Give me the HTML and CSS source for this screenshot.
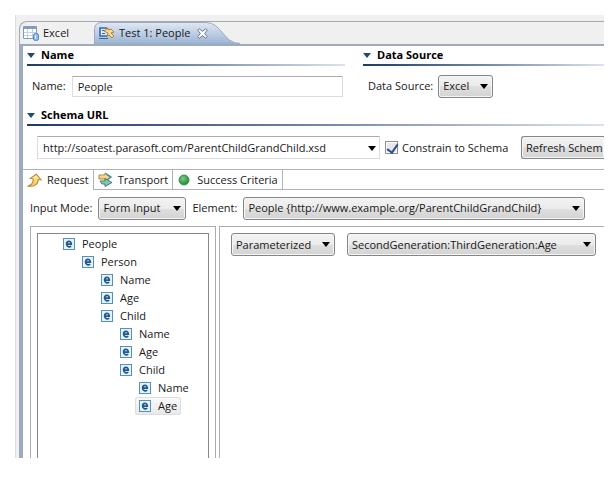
FILE: index.html
```html
<!DOCTYPE html>
<html lang="en">
<head>
<meta charset="utf-8">
<title>Test 1: People</title>
<link rel="stylesheet" href="styles.css">
</head>
<body>
<svg class="defs" width="0" height="0" aria-hidden="true">
  <linearGradient id="tabFill" x1="0" y1="0" x2="0" y2="1"><stop offset="0" stop-color="#e0e8f3"/><stop offset="1" stop-color="#9bb5d5"/></linearGradient>
  <linearGradient id="gold" x1="0" y1="0" x2="0" y2="1"><stop offset="0" stop-color="#fff3ae"/><stop offset="1" stop-color="#f0bd48"/></linearGradient>
  <radialGradient id="green" cx=".4" cy=".35" r=".65"><stop offset="0" stop-color="#85c889"/><stop offset="1" stop-color="#1f8a35"/></radialGradient>
  <symbol id="element" viewBox="0 0 12 12"><rect x=".5" y=".5" width="11" height="11" fill="#e4f3fa" stroke="#5990b8"/><path d="M3.6 6.1h4.7C8.3 2.3 3.6 2.4 3.6 6.1c0 3 3 3.2 4.6 2" fill="none" stroke="#215789" stroke-width="1.7"/></symbol>
</svg>
<main class="editor">
  <div class="editor-tabs" role="tablist">
    <button class="editor-tab" role="tab" aria-selected="false">
      <svg width="17" height="17" viewBox="0 0 17 17"><path d="M.5 1.5h13v12H.5z" fill="#fff" stroke="#8299b8"/><path d="M1 2h12v2H1z" fill="#7f9cc5"/><path d="M1 7.5h12M1 10.5h12M4.5 4v9M9.5 4v9" stroke="#c5d0df"/><rect x="10.5" y="8.5" width="5" height="7" rx="2" fill="#8dbbe5" stroke="#4c86bf"/><path d="M12.500 10.500v3" stroke="#fff"/></svg>
      Excel
    </button>
    <button class="editor-tab active" role="tab" aria-selected="true">
      <svg class="tab-shape" viewBox="0 0 146 23" preserveAspectRatio="none"><path d="M.5 23V7Q1 .5 8 .5h104c16 0 17 22 34 22v.5z" fill="url(#tabFill)" stroke="#9aa9bb"/></svg>
      <svg width="17" height="14" viewBox="0 0 17 14"><path d="M9 2H2v8h7" fill="#dceafa" stroke="#3568a5" stroke-width="1.6"/><path d="M4 4.5h4M4 7.5h3M1 12.5h9" stroke="#3568a5"/><path d="M6 5l4-3v2l3-1 3 3-3 1 3 3-2 2-3-3-2 1 1-3z" fill="#f8dc91" stroke="#aa8145"/></svg>
      Test 1: People
      <svg class="close" width="11" height="11" viewBox="0 0 11 11"><path d="M.7 2.2L2.2.7l3.3 2.7L8.800.7l1.500 1.500-2.700 3.300 2.700 3.300-1.500 1.500-3.300-2.700-3.300 2.700L.7 8.800l2.700-3.300z" fill="#fff" stroke="#6a7685"/></svg>
    </button>
  </div>
  <div class="editor-body">
    <div class="columns">
      <section>
        <h2>Name</h2>
        <div class="field"><label for="name">Name:</label><input class="text" id="name" value="People"></div>
      </section>
      <section>
        <h2>Data Source</h2>
        <div class="field"><label for="source">Data Source:</label><span class="pick source"><select id="source"><option>Excel</option></select></span></div>
      </section>
    </div>
    <section class="schema">
      <h2>Schema URL</h2>
      <div class="url-row">
        <div class="combo"><input id="url" aria-label="Schema URL" value="http://soatest.parasoft.com/ParentChildGrandChild.xsd"><button aria-label="Show schema list"></button></div>
        <input class="check" type="checkbox" id="constrain" checked><label for="constrain">Constrain to Schema</label>
        <button class="refresh">Refresh Schem</button>
      </div>
    </section>
    <div class="tabs" role="tablist">
      <button class="tab selected" role="tab" aria-selected="true"><svg width="15" height="15" viewBox="0 0 15 15"><path d="M1.5 14C6 12 6.5 9 6 6H3l5.5-5L14 6h-3c1 5-3 8-9.5 8z" transform="rotate(8 7 7)" fill="url(#gold)" stroke="#b48435"/></svg>Request</button>
      <button class="tab" role="tab" aria-selected="false"><svg width="15" height="15" viewBox="0 0 15 15"><path d="M1 3h6V.8l6 4.200-6 4.200V7H1z" fill="url(#gold)" stroke="#a78b45"/><path d="M2 9h5V6.500l7 4-7 4V12H4z" fill="#8bc6a2" stroke="#427e83"/><path d="M8 2l5 3-4 3" fill="none" stroke="#5387b4" stroke-width="1.5"/></svg>Transport</button>
      <button class="tab" role="tab" aria-selected="false"><svg width="15" height="15" viewBox="0 0 15 15"><circle cx="7" cy="8" r="5" fill="url(#green)" stroke="#3a9750"/></svg>Success Criteria</button>
    </div>
    <div class="mode-row">
      <label for="mode">Input Mode:</label><span class="pick mode"><select id="mode"><option>Form Input</option></select></span>
      <label for="element-type">Element:</label><span class="pick element"><select id="element-type"><option>People {http://www.example.org/ParentChildGrandChild}</option></select></span>
    </div>
    <div class="panes">
      <div class="pane tree-pane">
        <ul class="tree" role="tree">
          <li role="treeitem"><span><svg><use href="#element"/></svg>People</span>
            <ul role="group"><li role="treeitem"><span><svg><use href="#element"/></svg>Person</span>
              <ul role="group">
                <li role="treeitem"><span><svg><use href="#element"/></svg>Name</span></li>
                <li role="treeitem"><span><svg><use href="#element"/></svg>Age</span></li>
                <li role="treeitem"><span><svg><use href="#element"/></svg>Child</span>
                  <ul role="group">
                    <li role="treeitem"><span><svg><use href="#element"/></svg>Name</span></li>
                    <li role="treeitem"><span><svg><use href="#element"/></svg>Age</span></li>
                    <li role="treeitem"><span><svg><use href="#element"/></svg>Child</span>
                      <ul role="group">
                        <li role="treeitem"><span><svg><use href="#element"/></svg>Name</span></li>
                        <li role="treeitem" aria-selected="true"><span class="current"><svg><use href="#element"/></svg>Age</span></li>
                      </ul></li>
                  </ul></li>
              </ul></li></ul></li>
        </ul>
      </div>
      <div class="pane values">
        <span class="pick kind"><select aria-label="Value type"><option>Parameterized</option></select></span>
        <span class="pick column"><select aria-label="Column"><option>SecondGeneration:ThirdGeneration:Age</option></select></span>
      </div>
    </div>
  </div>
</main>
</body>
</html>
```
FILE: styles.css
```css
* { box-sizing: border-box; }
body {
  display: flex;
  min-height: 100vh;
  margin: 0;
  padding: 15px 8px 45px 15px;
  background: #fff;
  color: #181818;
  font: 11px/18px "Open Sans", "Noto Sans", sans-serif;
}
button, input, select { font: inherit; color: inherit; margin: 0; }
button { padding: 0; border: 0; background: none; white-space: nowrap; }
label { white-space: nowrap; }
svg { flex: none; }
.defs { position: absolute; }

.editor {
  display: flex;
  flex-direction: column;
  flex: 1;
  min-width: 0;
  padding: 6px 0 0 3px;
  background: #f0f0f0;
  border-left: 1px solid #dcdcdc;
}
.editor-tabs {
  display: flex;
  height: 23px;
  border: solid #a5a8ac;
  border-width: 1px 0 0 1px;
  border-top-left-radius: 8px;
}
.editor-tab {
  position: relative;
  display: flex;
  align-items: center;
  gap: 3px;
  width: 74px;
  padding-left: 3px;
}
.editor-tab.active { width: 146px; padding-left: 4px; gap: 4px; isolation: isolate; }
.tab-shape { position: absolute; inset: 0; z-index: -1; width: 100%; height: 100%; }
.close { margin-left: 3px; }

.editor-body {
  display: flex;
  flex-direction: column;
  flex: 1;
  min-width: 0;
  overflow: hidden;
  background: #fff;
  border: solid #9eabbc;
  border-width: 2px 0 0 4px;
}
.columns {
  display: grid;
  grid-template-columns: 318fr 241fr;
  gap: 18px;
  padding-left: 4px;
}
h2 {
  display: flex;
  align-items: center;
  gap: 6px;
  height: 20px;
  margin: 0;
  padding-bottom: 2px;
  font-size: 11px;
  line-height: 18px;
  color: #000;
  background: linear-gradient(90deg, #1d3a66, #6f86a8 50%, #dde3ec) bottom / 100% 2px no-repeat;
}
h2::before {
  content: "";
  border: 4px solid transparent;
  border-top: 5px solid #1f4a72;
  border-bottom: 0;
}
.field { display: flex; align-items: center; gap: 5px; height: 40px; padding-left: 5px; }
.text {
  flex: 1;
  min-width: 0;
  height: 21px;
  margin-left: 1px;
  margin-right: 2px;
  padding: 0 5px;
  border: 1px solid #dcdce0;
  border-top-color: #aaabb0;
}
.pick { position: relative; display: block; height: 23px; }
.pick::after, .combo button::after {
  content: "";
  position: absolute;
  top: 9px;
  right: 5px;
  border: 4px solid transparent;
  border-top: 5px solid #000;
  border-bottom: 0;
  pointer-events: none;
}
.pick select, .refresh {
  width: 100%;
  height: 23px;
  padding: 0 4px;
  border: 1px solid #858585;
  border-radius: 3px;
  background: linear-gradient(#f3f3f3, #ebebeb 50%, #dfdfdf 50%, #d3d3d3);
  box-shadow: inset 0 0 0 1px #f5f5f5;
  appearance: none;
}
.source { width: 55px; }
.schema { padding-left: 4px; }
.url-row { display: flex; align-items: center; height: 43px; padding-left: 10px; }
.combo { position: relative; display: flex; flex: 0 0 343px; height: 23px; margin-right: 5px; border: 1px solid #dcdce0; border-top-color: #aaabb0; }
.combo input { flex: 1; min-width: 0; padding: 0 5px; border: 0; background: none; }
.combo button { width: 17px; }
.combo button::after { right: 3px; }
.check {
  appearance: none;
  flex: none;
  width: 13px;
  height: 13px;
  margin-right: 4px;
  border: 1px solid #8b8e92;
  background: #e5e9ee;
  box-shadow: inset 0 0 0 1px #fff;
}
.check:checked::after {
  content: "";
  display: block;
  width: 5px;
  height: 9px;
  margin-left: 3px;
  border: solid #344e90;
  border-width: 0 2px 2px 0;
  rotate: 35deg;
}
.refresh { flex: none; width: 83px; margin-left: auto; border-right: 0; border-radius: 3px 0 0 3px; text-align: left; }

.tabs { display: flex; height: 21px; border: solid #b0b2b5; border-width: 1px 0; }
.tab { display: flex; align-items: center; gap: 5px; height: 19px; padding: 0 4px; border-right: 1px solid #b0b2b5; }
.tab.selected { height: 20px; background: #fff; }
.mode-row { display: flex; align-items: center; gap: 6px; height: 36px; padding-left: 7px; }
.mode { width: 88px; }
.element { width: 342px; }
.panes { display: flex; flex: 1; gap: 3px; padding-left: 7px; }
.pane { padding-top: 6px; border: 1px solid #aaacb0; border-bottom: 0; }
.tree-pane { flex: 0 0 186px; padding-inline: 6px; }
.tree { height: 100%; padding: 1px 0 0 21px; border: 1px solid #85878a; border-bottom: 0; }
ul { margin: 0; padding: 0; list-style: none; }
.tree ul { padding-left: 19px; }
.tree span { display: inline-flex; align-items: center; gap: 7px; height: 18px; padding: 0 4px; vertical-align: top; }
.tree svg { width: 12px; height: 12px; }
.tree .current { border-radius: 3px; background: linear-gradient(#fafafa, #e8e8e8); box-shadow: inset 0 0 0 1px #dedede; }
.values { display: flex; gap: 12px; flex: 1; min-width: 0; padding-left: 11px; border-right: 0; }
.kind { width: 104px; }
.column { width: 249px; }
```
